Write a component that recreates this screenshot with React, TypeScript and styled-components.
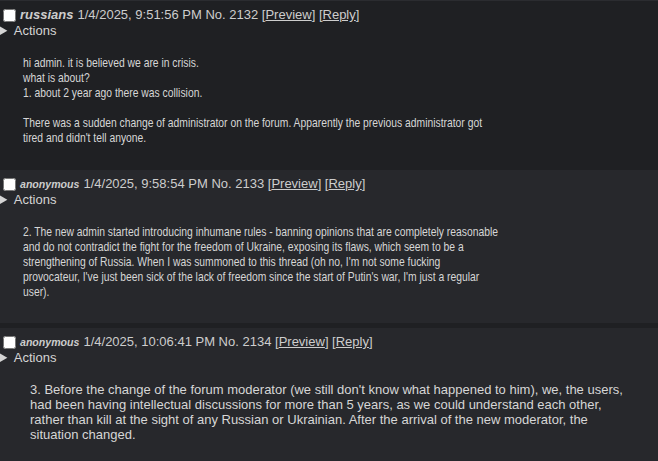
import React from 'react'
import styled, { createGlobalStyle } from 'styled-components'

const GlobalStyle = createGlobalStyle`
  html, body {
    margin: 0;
    padding: 0;
    background: #1f2023;
  }
  body {
    color: #d4d4d4;
    font-family: "Liberation Sans", Arial, sans-serif;
    font-size: 13px;
  }
`

const Thread = styled.div`
  display: flex;
  flex-direction: column;
  gap: 5px;
  border-top: 1px solid #2b2c30;
`

const Post = styled.div<{ $reply?: boolean }>`
  background: ${p => (p.$reply ? '#27282c' : 'transparent')};
  padding: 6px 0 ${p => (p.$reply ? '24px' : '20px')};
`

const Header = styled.div`
  display: flex;
  align-items: center;
  line-height: 16px;
  color: #cdcdcd;
`

const Check = styled.input`
  width: 13px;
  height: 13px;
  margin: 0 4px 0 3px;
`

const Name = styled.span<{ $big?: boolean }>`
  font-weight: bold;
  font-style: italic;
  font-size: ${p => (p.$big ? '13px' : '10.6px')};
  margin-right: 4px;
`

const Link = styled.a`
  color: #cdcdcd;
  text-decoration: underline;
  cursor: pointer;
`

const Actions = styled.details`
  line-height: 15px;
  summary {
    cursor: pointer;
  }
`

// narrow posts: Arial shapes squeezed the way Arial Narrow is
const Body = styled.div<{ $narrow?: boolean }>`
  margin: 17px 0 0 ${p => (p.$narrow ? '23px' : '30px')};
  font-size: 13px;
  line-height: 15px;
  color: #d6d6d6;
  white-space: nowrap;
  transform: ${p => (p.$narrow ? 'scaleX(0.795)' : 'none')};
  transform-origin: left top;
`

type PostData = {
  name: string
  big?: boolean
  narrow?: boolean
  date: string
  no: number
  lines: string[]
}

const posts: PostData[] = [
  {
    name: 'russians',
    big: true,
    narrow: true,
    date: '1/4/2025, 9:51:56 PM',
    no: 2132,
    lines: [
      'hi admin. it is believed we are in crisis.',
      'what is about?',
      '1. about 2 year ago there was collision.',
      '',
      'There was a sudden change of administrator on the forum. Apparently the previous administrator got',
      "tired and didn't tell anyone.",
    ],
  },
  {
    name: 'anonymous',
    narrow: true,
    date: '1/4/2025, 9:58:54 PM',
    no: 2133,
    lines: [
      '2. The new admin started introducing inhumane rules - banning opinions that are completely reasonable',
      'and do not contradict the fight for the freedom of Ukraine, exposing its flaws, which seem to be a',
      "strengthening of Russia. When I was summoned to this thread (oh no, I'm not some fucking",
      "provocateur, I've just been sick of the lack of freedom since the start of Putin's war, I'm just a regular",
      'user).',
    ],
  },
  {
    name: 'anonymous',
    date: '1/4/2025, 10:06:41 PM',
    no: 2134,
    lines: [
      "3. Before the change of the forum moderator (we still don't know what happened to him), we, the users,",
      'had been having intellectual discussions for more than 5 years, as we could understand each other,',
      'rather than kill at the sight of any Russian or Ukrainian. After the arrival of the new moderator, the',
      'situation changed.',
    ],
  },
]

export default function App() {
  return (
    <>
      <GlobalStyle />
      <Thread>
        {posts.map((p, i) => (
          <Post key={p.no} $reply={i > 0}>
            <Header>
              <Check type="checkbox" />
              <span>
                <Name $big={p.big}>{p.name}</Name>
                {p.date} No. {p.no} [<Link>Preview</Link>] [<Link>Reply</Link>]
              </span>
            </Header>
            <Actions>
              <summary>Actions</summary>
            </Actions>
            <Body $narrow={p.narrow}>
              {p.lines.map((l, j) => (
                <React.Fragment key={j}>
                  {l}
                  {j < p.lines.length - 1 && <br />}
                </React.Fragment>
              ))}
            </Body>
          </Post>
        ))}
      </Thread>
    </>
  )
}
